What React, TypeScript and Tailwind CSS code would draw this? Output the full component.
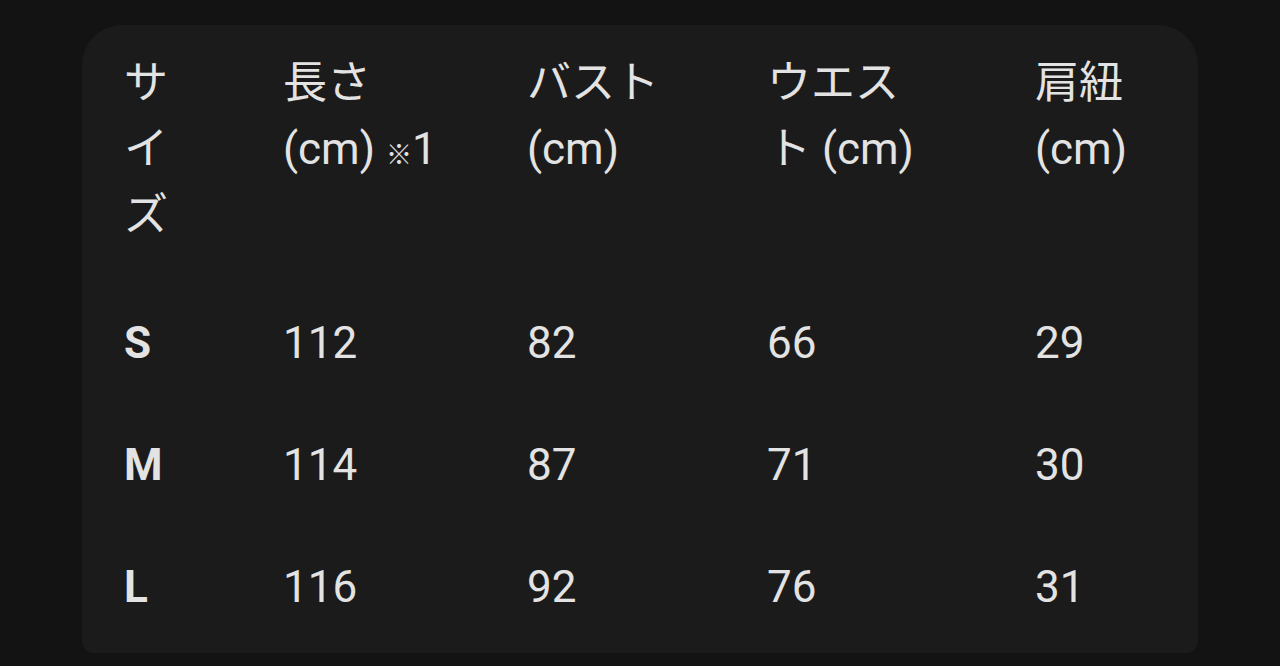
const headers: React.ReactNode[] = [
  <>サ<br />イ<br />ズ</>,
  <>長さ<br />(cm) <span className="text-[26px]">※</span>1</>,
  <>バスト<br />(cm)</>,
  <>ウエス<br />ト (cm)</>,
  <>肩紐<br />(cm)</>,
];

const rows = [
  ['S', '112', '82', '66', '29'],
  ['M', '114', '87', '71', '30'],
  ['L', '116', '92', '76', '31'],
];

const cols = 'grid grid-cols-[159px_244px_240px_268px_1fr]';

export default function App() {
  return (
    <div
      className="h-[666px] w-full overflow-hidden bg-[#131314] pt-[25px] pl-[82px]"
      style={{ fontFamily: "Roboto, 'Noto Sans CJK JP', sans-serif" }}
    >
      <div className="w-[1116px] h-[628px] rounded-t-[40px] rounded-b-[12px] bg-[#1b1b1b] px-[42px] pt-[25px] text-[44px] leading-[66px] text-[#e3e3e3]">
        <div className={`${cols} pb-[34px]`}>
          {headers.map((h, i) => (
            <div key={i}>{h}</div>
          ))}
        </div>
        {rows.map((r) => (
          <div key={r[0]} className={`${cols} py-[28px]`}>
            {r.map((c, i) => (
              <div key={i} className={i === 0 ? 'font-bold' : ''}>
                {c}
              </div>
            ))}
          </div>
        ))}
      </div>
    </div>
  );
}
